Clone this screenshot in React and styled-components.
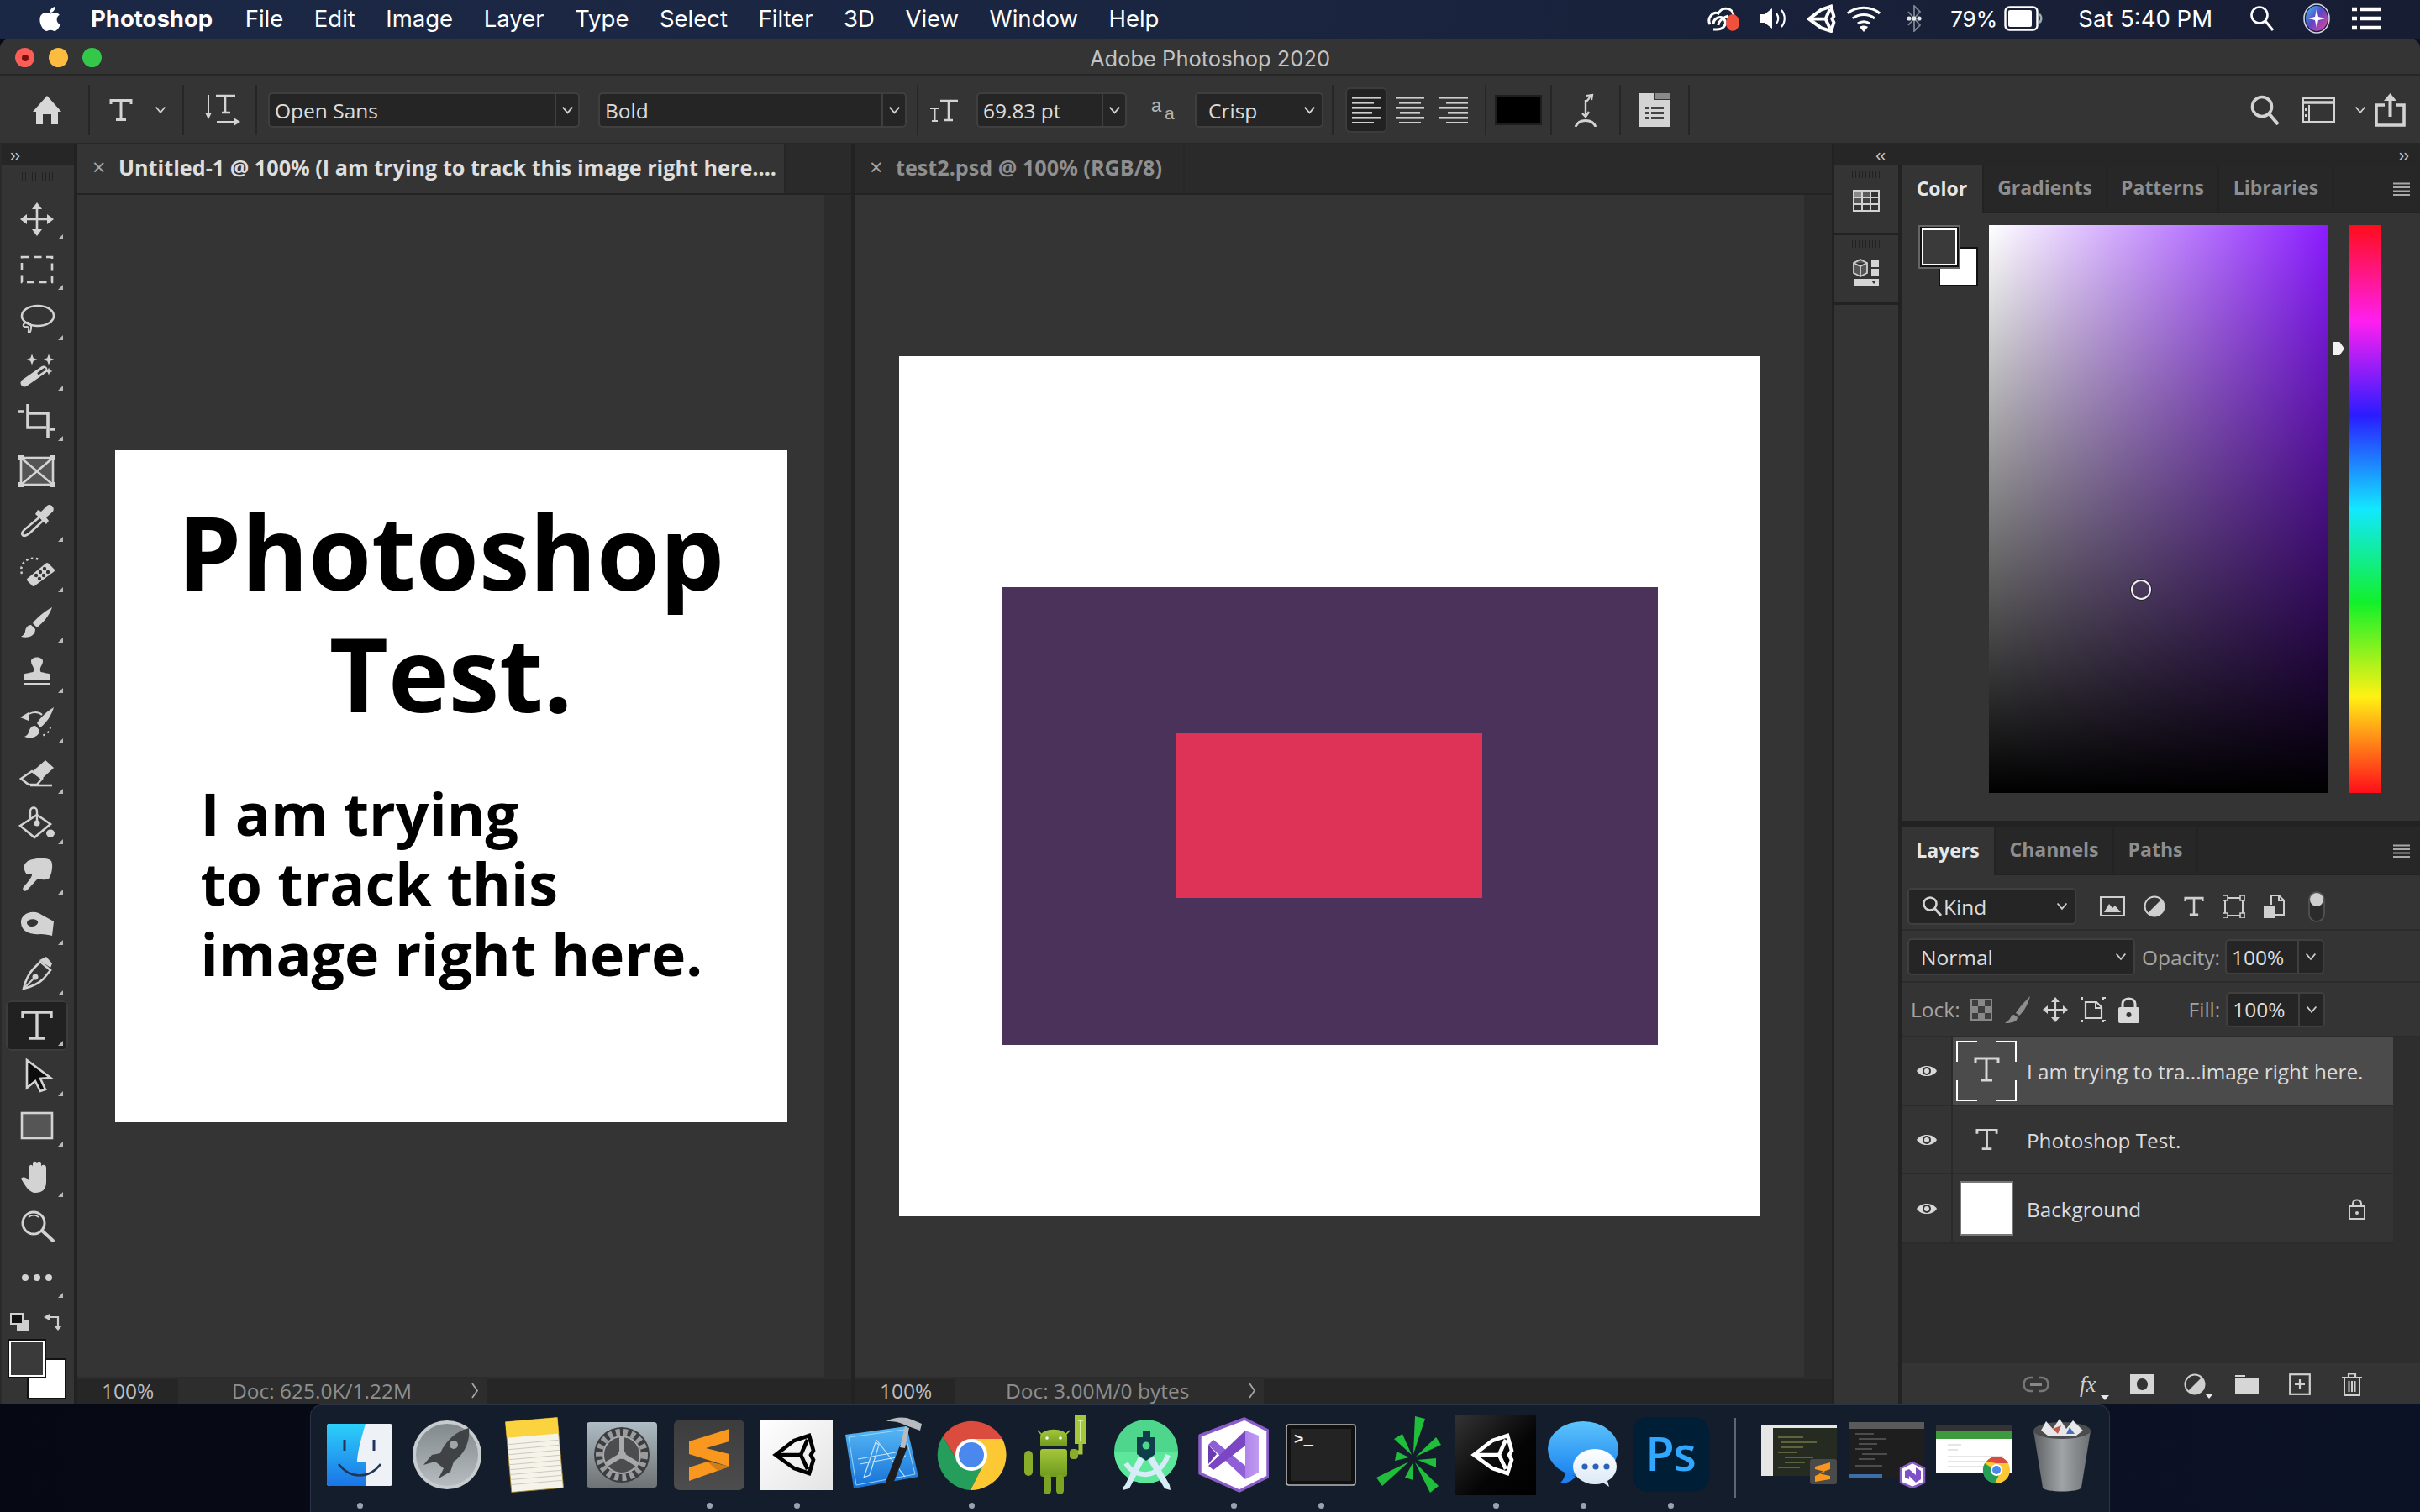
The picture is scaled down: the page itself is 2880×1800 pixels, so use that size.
import React from 'react';
import styled, { createGlobalStyle } from 'styled-components';
import { FaApple } from 'react-icons/fa';

const GlobalStyle = createGlobalStyle`
  html, body { margin: 0; padding: 0; background: #0a0f1d; }
  * { box-sizing: border-box; }
`;

const UI = `"Open Sans", "Noto Sans", sans-serif`;
const ICON = '#d3d3d3';

const Page = styled.div`
  width: 2880px;
  height: 1800px;
  overflow: hidden;
  background: linear-gradient(90deg, #060913 0%, #0c1226 100%);
  font-family: ${UI};
`;

const Glyph = styled.svg`
  display: block;
  flex: none;
  color: ${p => p.$color || ICON};
`;
const Ico = ({ w, h, vw, vh, color, children, style }) => (
  <Glyph width={w} height={h} viewBox={`0 0 ${vw || w} ${vh || h}`} $color={color} style={style}>{children}</Glyph>
);

/* ---------- macOS menu bar ---------- */
const MenuBar = styled.div`
  height: 46px;
  display: flex;
  align-items: center;
  padding: 0 46px 2px 43px;
  background: linear-gradient(90deg, #1b2845 0%, #1a2540 50%, #171d33 100%);
  color: #fff;
  font-family: "Inter", sans-serif;
  font-size: 27.5px;
`;
const MenuItems = styled.div`
  display: flex;
  align-items: center;
  gap: 36.5px;
  margin-left: 32px;
`;
const AppName = styled.span`
  font-weight: 700;
  margin-right: 2px;
`;
const Status = styled.div`
  margin-left: auto;
  display: flex;
  align-items: center;
  gap: 20px;
`;
const Clock = styled.span`
  margin: 0 24px 0 22px;
`;
const Percent = styled.span`
  font-size: 26px;
  margin: 0 -12px 0 12px;
`;

/* ---------- Photoshop window ---------- */
const Window = styled.div`
  height: 1626px;
  display: flex;
  flex-direction: column;
  background: #333;
  border-radius: 12px 12px 0 0;
  color: #d6d6d6;
  overflow: hidden;
`;
const TitleBar = styled.div`
  height: 44px;
  flex: none;
  position: relative;
  display: flex;
  align-items: center;
  justify-content: center;
  padding-top: 4px;
  font-family: "Inter", sans-serif;
  font-size: 25.5px;
  color: #c3c3c3;
  background: #343434;
  border-bottom: 2px solid #262626;
`;
const Lights = styled.div`
  position: absolute;
  left: 18px;
  top: 11px;
  display: flex;
  gap: 17px;
`;
const Light = styled.span`
  width: 23px;
  height: 23px;
  border-radius: 50%;
  background: ${p => p.$c};
  display: flex;
  align-items: center;
  justify-content: center;
  &::after {
    content: "";
    width: 8px;
    height: 8px;
    border-radius: 50%;
    background: ${p => p.$dot || 'transparent'};
  }
`;

const Options = styled.div`
  height: 82px;
  flex: none;
  display: flex;
  align-items: center;
  padding-top: 2px;
  background: #343434;
  border-bottom: 2px solid #272727;
`;
const OptCell = styled.div`
  width: ${p => p.$w}px;
  height: 60px;
  flex: none;
  display: flex;
  align-items: center;
  justify-content: ${p => p.$justify || 'center'};
  gap: ${p => p.$gap || 0}px;
  padding-left: ${p => p.$pl || 0}px;
  border-right: ${p => (p.$plain ? 'none' : '2px solid #262626')};
`;
const Field = styled.div`
  width: ${p => p.$w}px;
  height: ${p => p.$h || 42}px;
  flex: none;
  display: flex;
  align-items: center;
  background: #252525;
  border: 2px solid #3f3f3f;
  border-radius: 5px;
  font-size: 24.5px;
  color: ${p => p.$color || '#dcdcdc'};
  white-space: nowrap;
`;
const FieldText = styled.span`
  flex: 1;
  padding-left: ${p => p.$pl || 6}px;
`;
const FieldBtn = styled.span`
  width: ${p => p.$w || 28}px;
  height: 100%;
  flex: none;
  display: flex;
  align-items: center;
  justify-content: center;
  border-left: ${p => (p.$plain ? 'none' : '2px solid #3f3f3f')};
`;
const Chevron = ({ size = 15, color = '#cfcfcf' }) => (
  <Ico w={size} h={size * 0.7} vw={14} vh={10} color={color}>
    <path d="M1.5 1.5 L7 8 L12.5 1.5" fill="none" stroke="currentColor" strokeWidth="1.8" />
  </Ico>
);
const AlignBtn = styled.div`
  width: 50px;
  height: 54px;
  display: flex;
  align-items: center;
  justify-content: center;
  border-radius: 6px;
  background: ${p => (p.$active ? '#222' : 'transparent')};
  border: 2px solid ${p => (p.$active ? '#3c3c3c' : 'transparent')};
`;
const ColorChip = styled.div`
  width: 56px;
  height: 36px;
  background: #000;
  border: 2px solid #1e1e1e;
`;
const OptRight = styled.div`
  margin-left: auto;
  display: flex;
  align-items: center;
  padding-right: 17px;
`;

/* ---------- workspace ---------- */
const Workspace = styled.div`
  flex: 1;
  min-height: 0;
  display: flex;
  background: #222;
`;
const ToolColumn = styled.div`
  width: 88px;
  flex: none;
  display: flex;
  flex-direction: column;
  background: #343434;
  margin-right: 4px;
  border-left: 2px solid #2a2a2a;
`;
const Collapse = styled.div`
  height: 25px;
  flex: none;
  display: flex;
  align-items: center;
  justify-content: ${p => p.$justify || 'flex-start'};
  padding: 0 ${p => p.$px || 10}px 4px;
  background: #262626;
  color: #c8c8c8;
  font-size: 22px;
  letter-spacing: -1px;
`;
const Grip = styled.div`
  width: ${p => p.$w || 38}px;
  height: ${p => p.$h || 10}px;
  flex: none;
  margin: ${p => p.$m || '8px auto 16px'};
  background: repeating-linear-gradient(90deg, #222 0 1.5px, transparent 1.5px 4px);
`;
const ToolBtn = styled.div`
  position: relative;
  height: 60px;
  width: 74px;
  flex: none;
  margin-left: 5px;
  display: flex;
  align-items: center;
  justify-content: center;
  border-radius: 6px;
  background: ${p => (p.$active ? '#212121' : 'transparent')};
  box-shadow: ${p => (p.$active ? 'inset 0 0 0 2px #3c3c3c' : 'none')};
  &::after {
    content: "";
    display: ${p => (p.$flyout ? 'block' : 'none')};
    position: absolute;
    right: 6px;
    bottom: 6px;
    border-style: solid;
    border-width: 0 0 6px 6px;
    border-color: transparent transparent #b9b9b9 transparent;
  }
`;
const SwatchBlock = styled.div`
  flex: 1;
  display: flex;
  flex-direction: column;
  padding: 12px 0 0 8px;
`;
const SwapRow = styled.div`
  display: flex;
  align-items: center;
  gap: 18px;
  padding: 0 0 10px 2px;
`;
const SwatchStack = styled.div`
  position: relative;
  width: 68px;
  height: 70px;
`;
const Swatch = styled.div`
  position: absolute;
  left: ${p => p.$x}px;
  top: ${p => p.$y}px;
  width: ${p => p.$w}px;
  height: ${p => p.$h}px;
  background: ${p => p.$bg};
  border: ${p => p.$b || '2px solid #fff'};
  outline: 2px solid #111;
  box-shadow: ${p => (p.$ring ? '0 0 0 4px #666' : 'none')};
`;

const DocPane = styled.div`
  width: ${p => p.$w}px;
  flex: none;
  margin-right: ${p => p.$mr || 0}px;
  display: flex;
  flex-direction: column;
`;
const TabRow = styled.div`
  height: 60px;
  flex: none;
  display: flex;
  background: #2a2a2a;
  border-bottom: 2px solid #232323;
`;
const DocTab = styled.div`
  width: ${p => p.$w}px;
  display: flex;
  align-items: center;
  gap: 19px;
  padding: 0 0 5px 18px;
  background: ${p => (p.$active ? '#343434' : '#2a2a2a')};
  border-right: 2px solid #262626;
  color: ${p => (p.$active ? '#dedede' : '#8f8f8f')};
  font-size: 25.2px;
  font-weight: 700;
  white-space: nowrap;
  overflow: hidden;
`;
const CloseX = styled.span`
  font-size: 27px;
  font-weight: 400;
  color: #a6a6a6;
  width: 12px;
`;
const DocBody = styled.div`
  flex: 1;
  min-height: 0;
  display: flex;
`;
const CanvasArea = styled.div`
  flex: 1;
  display: flex;
  align-items: center;
  justify-content: center;
  background: #343434;
`;
const ScrollGutter = styled.div`
  width: ${p => p.$w}px;
  flex: none;
  background: #2c2c2c;
`;
const StatusBar = styled.div`
  height: 33px;
  flex: none;
  display: flex;
  align-items: stretch;
  background: #262626;
  border-top: 3px solid #2c2c2c;
  font-size: 24.5px;
  color: #bdbdbd;
`;
const ZoomField = styled.div`
  width: ${p => p.$w}px;
  padding: 0 0 4px ${p => p.$pl}px;
  display: flex;
  align-items: center;
`;
const DocInfo = styled.div`
  width: ${p => p.$w}px;
  display: flex;
  align-items: center;
  justify-content: space-between;
  padding: 0 9px 4px ${p => p.$pl}px;
  background: #2d2d2d;
  color: #8e8e8e;
`;
const InfoArrow = () => (
  <Ico w={10} h={19}>
    <path d="M2 1 L8 9.5 L2 18" fill="none" stroke="#a5a5a5" strokeWidth="1.8" />
  </Ico>
);

const Artboard = styled.div`
  width: ${p => p.$size}px;
  height: ${p => p.$size}px;
  flex: none;
  background: #fff;
  color: #000;
  font-weight: 700;
`;
const BigText = styled.div`
  padding-top: 48px;
  font-size: 121.4px;
  line-height: 145px;
  text-align: center;
`;
const SmallText = styled.div`
  margin: 52px 0 0 102px;
  font-size: 69.83px;
  line-height: 83.5px;
`;
const Plum = styled.div`
  width: 781px;
  height: 545px;
  margin: 275px auto 0;
  background: #4a325a;
  display: flex;
  align-items: center;
  justify-content: center;
`;
const Rose = styled.div`
  width: 364px;
  height: 196px;
  background: #de3357;
`;

/* ---------- right docks ---------- */
const RightSide = styled.div`
  flex: 1;
  min-width: 0;
  display: flex;
  flex-direction: column;
  margin-left: 3px;
`;
const RightCols = styled.div`
  flex: 1;
  min-height: 0;
  display: flex;
`;
const IconDock = styled.div`
  width: 76px;
  flex: none;
  display: flex;
  flex-direction: column;
  gap: 3px;
  background: #222;
  margin-right: 4px;
`;
const DockCard = styled.div`
  height: ${p => p.$h}px;
  flex: ${p => (p.$grow ? 1 : 'none')};
  display: flex;
  flex-direction: column;
  align-items: center;
  background: #343434;
`;
const Panels = styled.div`
  flex: 1;
  min-width: 0;
  display: flex;
  flex-direction: column;
  gap: 8px;
`;
const Panel = styled.div`
  height: ${p => p.$h}px;
  flex: ${p => (p.$grow ? 1 : 'none')};
  min-height: 0;
  display: flex;
  flex-direction: column;
  background: #343434;
`;
const PanelTabs = styled.div`
  height: 57px;
  flex: none;
  display: flex;
  align-items: stretch;
  background: #272727;
  border-bottom: 2px solid #232323;
`;
const PanelTab = styled.div`
  width: ${p => p.$w}px;
  flex: none;
  display: flex;
  align-items: center;
  justify-content: center;
  padding-bottom: 3px;
  font-size: 23px;
  font-weight: 700;
  color: ${p => (p.$active ? '#e6e6e6' : '#8e8e8e')};
  background: ${p => (p.$active ? '#343434' : 'transparent')};
  margin-bottom: ${p => (p.$active ? '-2px' : 0)};
  border-right: 2px solid #232323;
`;
const PanelMenu = styled.div`
  margin-left: auto;
  padding-right: 12px;
  display: flex;
  align-items: center;
`;
const ColorBody = styled.div`
  flex: 1;
  display: flex;
  padding: 14px 0 0 20px;
`;
const ColorChips = styled.div`
  position: relative;
  width: 84px;
  height: 72px;
  flex: none;
`;
const Picker = styled.div`
  position: relative;
  width: 404px;
  height: 676px;
  flex: none;
  background:
    linear-gradient(180deg, transparent 0%, #000 100%),
    linear-gradient(90deg, #fff 0%, #8a1cff 100%);
`;
const PickRing = styled.span`
  position: absolute;
  left: 169px;
  top: 422px;
  width: 24px;
  height: 24px;
  border-radius: 50%;
  border: 2px solid #eee;
  box-shadow: 0 0 0 1px #222;
`;
const HueWrap = styled.div`
  position: relative;
  width: 38px;
  height: 676px;
  margin-left: 24px;
  background: linear-gradient(180deg, #ff0d1a 0%, #ff1ff0 17%, #2a1cff 33.5%, #12e8ff 50%, #12f02a 66.5%, #fff214 83%, #ff0d1a 100%);
`;
const HueArrow = styled.span`
  position: absolute;
  left: -19px;
  top: 139px;
  width: 14px;
  height: 16px;
  background: #f2f2f2;
  clip-path: polygon(0 0, 60% 0, 100% 50%, 60% 100%, 0 100%);
`;

const CtrlRow = styled.div`
  height: ${p => p.$h}px;
  flex: none;
  display: flex;
  align-items: center;
  padding: ${p => p.$pt || 0}px 0 0 ${p => p.$pl || 7}px;
  border-bottom: 2px solid #2b2b2b;
  font-size: 24.5px;
`;
const CtrlLabel = styled.span`
  color: #a3a3a3;
  margin: ${p => p.$m || '0 0 0 8px'};
`;
const IconRow = styled.div`
  display: flex;
  align-items: center;
  gap: ${p => p.$gap}px;
  margin-left: ${p => p.$ml}px;
`;
const LayerList = styled.div`
  flex: 1;
  min-height: 0;
  display: flex;
  flex-direction: column;
  padding-right: 32px;
  background: #2e2e2e;
`;
const LayerRow = styled.div`
  height: ${p => p.$h || 81}px;
  flex: none;
  display: flex;
  align-items: center;
  background: ${p => (p.$selected ? '#4b4b4b' : '#343434')};
  border-bottom: 2px solid #2b2b2b;
  color: #dcdcdc;
  font-size: 24.3px;
`;
const EyeCell = styled.div`
  width: 61px;
  height: 100%;
  flex: none;
  display: flex;
  align-items: center;
  justify-content: center;
  background: #343434;
  border-right: 2px solid #2b2b2b;
`;
const Thumb = styled.div`
  width: 88px;
  height: 100%;
  flex: none;
  display: flex;
  align-items: center;
  justify-content: center;
  padding-right: 8px;
`;
const WhiteThumb = styled.div`
  width: 64px;
  height: 65px;
  background: #fff;
  border: 2px solid #777;
`;
const LayerName = styled.span`
  flex: 1;
  white-space: nowrap;
  padding-top: 1px;
`;
const LayerLock = styled.span`
  margin-right: 33px;
`;
const PanelFooter = styled.div`
  height: 49px;
  flex: none;
  display: flex;
  align-items: center;
  background: #343434;
  padding-left: 144px;
`;

/* ---------- macOS dock ---------- */
const Dock = styled.div`
  width: 2142px;
  height: 128px;
  margin-left: 369px;
  display: flex;
  padding: 0 0 0 6px;
  background: #141d2c;
  border: 1px solid #2a3444;
  border-bottom: none;
  border-radius: 14px 14px 0 0;
`;
const DockSlot = styled.div`
  position: relative;
  width: 104px;
  flex: none;
  display: flex;
  align-items: center;
  justify-content: center;
  padding-bottom: 10px;
  &::after {
    content: "";
    display: ${p => (p.$open ? 'block' : 'none')};
    position: absolute;
    left: 49px;
    bottom: 4px;
    width: 7px;
    height: 7px;
    border-radius: 50%;
    background: #9aa3ad;
  }
`;
const DockSep = styled.div`
  width: 2px;
  height: 95px;
  margin: 15px 24px 0 24px;
  flex: none;
  background: #5d6672;
`;
const PsTile = styled.div`
  width: 91px;
  height: 89px;
  border-radius: 18px;
  background: #001e36;
  color: #31a8ff;
  font-size: 56px;
  font-weight: 600;
  letter-spacing: -1px;
  line-height: 84px;
  text-align: center;
`;

/* ---------- small drawings ---------- */
const SerifT = ({ w = 28, h = 28, color }) => (
  <Ico w={w} h={h} vw={28} vh={28} color={color}>
    <path d="M2 7 V2.5 H26 V7 M14 2.5 V25.5 M8 25.5 H20" fill="none" stroke="currentColor" strokeWidth="3" />
  </Ico>
);
const Hamburger = () => (
  <Ico w={20} h={16}>
    <path d="M0 1.5H20M0 6H20M0 10.5H20M0 15H20" stroke="#a9a9a9" strokeWidth="2" />
  </Ico>
);
const Eye = () => (
  <Ico w={26} h={18}>
    <path d="M1 9 C6 1 20 1 25 9 C20 17 6 17 1 9 Z" fill="#d8d8d8" />
    <circle cx="13" cy="9" r="5" fill="#343434" />
    <circle cx="13" cy="9" r="3" fill="#d8d8d8" />
  </Ico>
);
const AlignIcon = ({ kind }) => {
  const rows = [0, 6, 12, 18, 24, 30];
  const widths = [34, 26, 34, 24, 34, 26];
  return (
    <Ico w={36} h={32}>
      {rows.map((y, i) => {
        const w = widths[i];
        const x = kind === 'l' ? 1 : kind === 'c' ? (36 - w) / 2 : 35 - w;
        return <rect key={y} x={x} y={y} width={w} height="2.6" fill="#cfcfcf" />;
      })}
    </Ico>
  );
};
const SmallCaret = styled.span`
  align-self: flex-end;
  margin: 0 0 -4px -1px;
  border-style: solid;
  border-width: 6px 5px 0 5px;
  border-color: #e8e8e8 transparent transparent transparent;
`;
const UnityPaths = ({ color = '#fff', sw = 4.6 }) => (
  <g fill="none" stroke={color} strokeWidth={sw}>
    <path d="M3 27 L25 10 L43 4 L48 22 L45 27 L48 33 L43 49 L25 43 Z" />
    <path d="M3 27 H33 L41 9 M33 27 L41 44" />
  </g>
);

/* tools, drawn on a 44 box */
const s = { fill: 'none', stroke: 'currentColor', strokeWidth: 2.6 };
const f = { fill: 'currentColor' };
const Spark = ({ x, y, r }) => (
  <path d={`M${x} ${y - r} L${x + r * 0.28} ${y - r * 0.28} L${x + r} ${y} L${x + r * 0.28} ${y + r * 0.28} L${x} ${y + r} L${x - r * 0.28} ${y + r * 0.28} L${x - r} ${y} L${x - r * 0.28} ${y - r * 0.28} Z`} {...f} />
);
const toolIcons = [
  <g key="move">
    <path d="M22 5V39M5 22H39" {...s} />
    <path d="M22 2 L28 10 H16Z M22 42 L28 34 H16Z M2 22 L10 16 V28Z M42 22 L34 16 V28Z" {...f} />
  </g>,
  <rect key="marquee" x="4" y="7" width="36" height="30" {...s} strokeDasharray="9 5.5" />,
  <g key="lasso" {...s}>
    <ellipse cx="23" cy="17" rx="19" ry="12" />
    <path d="M6 27 C10 23 14 25 15 29 C16 34 13 38 12 37 C11 35 14 30 10 30 C7 31 5 29 6 27 Z" strokeWidth="2" />
  </g>,
  <g key="wand">
    <path d="M7 37 L30 21" stroke="currentColor" strokeWidth="9" strokeLinecap="round" />
    <path d="M24 25.5 L31 20.5" stroke="#343434" strokeWidth="3" strokeLinecap="round" />
    <Spark x={16} y={9} r={6.5} /><Spark x={36} y={9} r={6.5} /><Spark x={36} y={23} r={4.5} />
  </g>,
  <path key="crop" d="M-2 11 H6 M11 2 V30 H33 M11 13 H35 V42 M38 32 H46" fill="none" stroke="currentColor" strokeWidth="3.6" />,
  <g key="frame">
    <rect x="3" y="6" width="38" height="32" fill="#555" stroke="currentColor" strokeWidth="2.6" />
    <path d="M3 6 L41 38 M41 6 L3 38" {...s} />
    <path d="M0 3h6v6H0Z M38 3h6v6h-6Z M0 35h6v6H0Z M38 35h6v6h-6Z" {...f} />
  </g>,
  <g key="dropper">
    <path d="M27 15 L9 30 C5 33 3 36 5 38 C7 40 10 38 13 36 L31 19" {...s} />
    <path d="M20 13 L33 25 L36 21 L33 17 L41 10 C44 5 38 0 34 3 L27 10 L23 8 Z" {...f} />
  </g>,
  <g key="heal">
    <path d="M12 31 L34 13 L41 20 L18 37 Z" fill="currentColor" stroke="currentColor" strokeWidth="4" strokeLinejoin="round" />
    <g fill="#343434"><circle cx="21" cy="26" r="2.2" /><circle cx="26" cy="22" r="2.2" /><circle cx="31" cy="18" r="2.2" /><circle cx="25" cy="30" r="2.2" /><circle cx="30" cy="26" r="2.2" /><circle cx="35" cy="22" r="2.2" /></g>
    <path d="M4 24 C0 12 12 2 24 7" fill="none" stroke="currentColor" strokeWidth="2.4" strokeDasharray="2.5 3.5" />
  </g>,
  <path key="brush" d="M40 4 C32 8 22 16 17 23 L22 28 C30 22 37 13 40 4 Z M15 25 C10 25 8 30 8 33 C7 36 5 38 3 39 C10 41 20 39 20 30 Z" {...f} />,
  <g key="stamp" {...f}>
    <path d="M15 8 C15 2 29 2 29 8 C29 13 25 14 26 20 C26 22 36 22 38 24 V31 H6 V24 C8 22 18 22 18 20 C19 14 15 13 15 8 Z" />
    <rect x="6" y="34" width="32" height="3" />
  </g>,
  <g key="history">
    <path d="M42 3 C34 8 26 15 22 22 L26 27 C33 22 39 13 42 3 Z M20 25 C14 25 13 30 12 33 C11 36 9 37 7 38 C14 41 25 39 25 30 Z" {...f} />
    <path d="M2 15 L12 9 L12 19 Z" {...f} />
    <path d="M10 13 C15 8 24 8 28 12" {...s} strokeWidth="2" />
    <path d="M38 26 C38 31 34 35 28 37" fill="none" stroke="currentColor" strokeWidth="2" strokeDasharray="2.5 3.5" />
  </g>,
  <g key="eraser">
    <path d="M16 20 L32 6 L42 15 L28 28 Z" {...f} />
    <path d="M3 28 L16 19 L28 28 L22 35 H12 Z" {...s} />
    <path d="M14 36 H40" {...s} />
  </g>,
  <g key="bucket">
    <path d="M2 24 L22 11 L38 22 L19 38 Z" {...s} />
    <path d="M14 15 V7 C14 1 22 1 22 7 V22" fill="none" stroke="currentColor" strokeWidth="2.4" />
    <circle cx="22" cy="21" r="3.5" {...f} />
    <ellipse cx="38" cy="33" rx="5" ry="4.5" {...f} />
  </g>,
  <path key="smudge" d="M10 7 C14 3 32 1 38 5 C42 8 40 22 36 27 C30 30 26 26 22 28 L10 41 C6 43 4 40 6 37 C10 32 17 25 16 21 C12 23 9 22 8 19 C6 14 6 10 10 7 Z" {...f} />,
  <path key="dodge" fillRule="evenodd" d="M3 20 C2 10 14 4 24 8 C30 11 36 15 42 18 L40 35 C36 34 32 33 26 33 C18 34 4 32 3 20 Z M10 19 C10 25 20 26 23 20 C25 15 12 13 10 19 Z" {...f} />,
  <g key="pen">
    <path d="M26 6 L38 16 L30 26 C24 32 14 36 6 38 C8 30 12 20 18 14 Z" {...s} />
    <path d="M25 4 L33 0 L40 8 L38 13 Z" {...f} />
    <circle cx="20" cy="24" r="3.5" {...f} />
    <path d="M8 36 L19 25" {...s} strokeWidth="2" />
  </g>,
  <path key="type" d="M5 13 V6 H39 V13 M22 6 V37 M12 37 H32" fill="none" stroke="currentColor" strokeWidth="3.4" />,
  <path key="pathsel" d="M10 3 L38 24 L26 25 L32 38 L26 40 L20 28 L10 36 Z" fill="#0c0c0c" stroke="currentColor" strokeWidth="2.6" />,
  <rect key="rect" x="4" y="6" width="36" height="30" fill="#555" stroke="currentColor" strokeWidth="2.6" />,
  <path key="hand" d="M3 24 C6 21 10 23 13 27 V10 C13 7 17 7 17 10 V6 C17 3 22 3 22 6 V6 C22 3 27 3 27 6 V10 C27 7 33 7 33 11 V28 C33 37 28 41 20 41 C13 41 8 33 3 24 Z" {...f} />,
  <g key="zoom">
    <circle cx="18" cy="17" r="13" {...s} strokeWidth="3" />
    <path d="M28 26 L41 38" stroke="currentColor" strokeWidth="4" strokeLinecap="round" />
    <path d="M12 10 C16 7 20 7 24 10" {...s} strokeWidth="1.6" />
  </g>,
  <g key="more" {...f}><circle cx="8" cy="22" r="4" /><circle cx="22" cy="22" r="4" /><circle cx="36" cy="22" r="4" /></g>,
];
const noFlyout = ['zoom', 'frame'];

const menus = ['File', 'Edit', 'Image', 'Layer', 'Type', 'Select', 'Filter', '3D', 'View', 'Window', 'Help'];

const App = () => {
  return (
    <Page>
      <GlobalStyle />
      <MenuBar>
        <FaApple size={33} color="#fff" />
        <MenuItems>
          <AppName>Photoshop</AppName>
          {menus.map(m => <span key={m}>{m}</span>)}
        </MenuItems>
        <Status>
          <Ico w={42} h={30}>
            <g fill="none" stroke="#fff" strokeWidth="3">
              <path d="M4 22 C0 14 8 6 14 9 C18 0 32 2 32 12" />
              <path d="M8 22 C8 14 18 10 22 18 C24 22 20 28 12 28 H8" />
              <path d="M14 23 C14 17 22 13 26 12" />
            </g>
            <ellipse cx="31" cy="20" rx="8" ry="10" fill="#f0503c" />
          </Ico>
          <Ico w={34} h={28}>
            <path d="M1 9 H7 L16 2 V26 L7 19 H1 Z" fill="#fff" />
            <path d="M21 8 C24 12 24 16 21 20 M27 4 C32 10 32 18 27 24" fill="none" stroke="#fff" strokeWidth="2.2" />
          </Ico>
          <Ico w={34} h={34} vw={52} vh={52} style={{ marginLeft: 4 }}>
            <UnityPaths sw={6} />
          </Ico>
          <Ico w={42} h={32} style={{ marginLeft: -8 }}>
            <g fill="none" stroke="#fff" strokeWidth="3.2">
              <path d="M2 10 C12 1 30 1 40 10" /><path d="M8 16 C15 10 27 10 34 16" /><path d="M14 22 C18 19 24 19 28 22" />
            </g>
            <path d="M21 32 L16 26 C19 24 23 24 26 26 Z" fill="#fff" />
          </Ico>
          <Ico w={22} h={32} style={{ marginLeft: 8 }}>
            <path d="M4 8 L18 24 L11 31 V1 L18 8 L4 24" fill="none" stroke="#7d8694" strokeWidth="1.8" />
            <circle cx="5" cy="16" r="2.6" fill="#e6e6e6" /><circle cx="11" cy="16" r="2.6" fill="#e6e6e6" /><circle cx="17" cy="16" r="2.6" fill="#e6e6e6" />
          </Ico>
          <Percent>79%</Percent>
          <Ico w={46} h={30}>
            <rect x="1.5" y="1.5" width="38" height="27" rx="5" fill="none" stroke="#fff" strokeWidth="2.4" />
            <rect x="5" y="5" width="28" height="20" rx="2" fill="#fff" />
            <path d="M42 10 C45 12 45 18 42 20" fill="none" stroke="#9aa" strokeWidth="2.5" />
          </Ico>
          <Clock>Sat 5:40 PM</Clock>
          <Ico w={30} h={32}>
            <circle cx="12" cy="12" r="9.5" fill="none" stroke="#fff" strokeWidth="2.6" />
            <path d="M19 19 L28 30" stroke="#fff" strokeWidth="3" />
          </Ico>
          <Ico w={32} h={36} style={{ margin: '0 6px 0 14px' }}>
            <defs>
              <linearGradient id="siri" x1="0" y1="0" x2="1" y2="1">
                <stop offset="0" stopColor="#38c6f2" /><stop offset="0.45" stopColor="#5a46c8" /><stop offset="1" stopColor="#f0459a" />
              </linearGradient>
            </defs>
            <ellipse cx="16" cy="18" rx="15" ry="17" fill="#16203a" stroke="#cfd3e0" strokeWidth="1.6" />
            <ellipse cx="16" cy="18" rx="13" ry="15" fill="url(#siri)" />
            <path d="M16 7 L18 16 L26 18 L18 20 L16 29 L14 20 L6 18 L14 16 Z" fill="#fff" />
          </Ico>
          <Ico w={35} h={28}>
            <path d="M0 3H6M10 3H35M0 14H6M10 14H35M0 25H6M10 25H35" stroke="#fff" strokeWidth="4.4" />
          </Ico>
        </Status>
      </MenuBar>

      <Window>
        <TitleBar>
          <Lights>
            <Light $c="#fc5d57" $dot="#7a0f0c" />
            <Light $c="#fdbc40" />
            <Light $c="#34c84a" />
          </Lights>
          Adobe Photoshop 2020
        </TitleBar>

        <Options>
          <OptCell $w={107} $pl={6}>
            <Ico w={42} h={36}>
              <path d="M21 1 L38 20 H34 V35 H26 V23 H16 V35 H8 V20 H4 Z" fill="#d8d8d8" />
            </Ico>
          </OptCell>
          <OptCell $w={112} $gap={26} $pl={3}>
            <SerifT />
            <Chevron size={14} />
          </OptCell>
          <OptCell $w={87} $pl={6}>
            <Ico w={42} h={38}>
              <path d="M4 1 V26" stroke={ICON} strokeWidth="2" />
              <path d="M0 22 L4 30 L8 22 Z" fill={ICON} />
              <path d="M13 2 H36 M24 2 V22 M20 22 H30" stroke={ICON} strokeWidth="2.6" fill="none" />
              <path d="M14 33 H36" stroke={ICON} strokeWidth="2" />
              <path d="M34 28 L42 33 L34 38 Z" fill={ICON} />
            </Ico>
          </OptCell>
          <OptCell $w={787} $justify="flex-start" $pl={13} $gap={22}>
            <Field $w={371}>
              <FieldText>Open Sans</FieldText>
              <FieldBtn><Chevron /></FieldBtn>
            </Field>
            <Field $w={367}>
              <FieldText>Bold</FieldText>
              <FieldBtn><Chevron /></FieldBtn>
            </Field>
          </OptCell>
          <OptCell $w={494} $justify="flex-start" $pl={14}>
            <Ico w={34} h={28} style={{ marginRight: 21 }}>
              <path d="M12 3 H33 M22 3 V26 M17 26 H27" stroke={ICON} strokeWidth="2.6" fill="none" />
              <path d="M0 12 H11 M5.5 12 V27 M2 27 H9" stroke={ICON} strokeWidth="2" fill="none" />
            </Ico>
            <Field $w={179}>
              <FieldText>69.83 pt</FieldText>
              <FieldBtn><Chevron /></FieldBtn>
            </Field>
            <Ico w={32} h={30} style={{ margin: '0 22px 0 27px' }}>
              <text x="2" y="17" fontSize="22" fill="#b5b5b5" fontFamily="Liberation Sans, sans-serif">a</text>
              <text x="18" y="26" fontSize="21" fill="#b5b5b5" fontFamily="Liberation Sans, sans-serif">a</text>
            </Ico>
            <Field $w={153}>
              <FieldText $pl={14}>Crisp</FieldText>
              <FieldBtn $plain $w={30}><Chevron /></FieldBtn>
            </Field>
          </OptCell>
          <OptCell $w={182} $justify="flex-start" $pl={14} $gap={2}>
            <AlignBtn $active><AlignIcon kind="l" /></AlignBtn>
            <AlignBtn><AlignIcon kind="c" /></AlignBtn>
            <AlignBtn><AlignIcon kind="r" /></AlignBtn>
          </OptCell>
          <OptCell $w={78}><ColorChip /></OptCell>
          <OptCell $w={82}>
            <Ico w={28} h={40}>
              <path d="M15 10 C17 8 19 6 20 2 M15 3 L22 2 L21 8" stroke={ICON} strokeWidth="2.2" fill="none" />
              <path d="M14 8 V26 M10 24 L14 28 L18 22" stroke={ICON} strokeWidth="2.4" fill="none" />
              <path d="M2 40 C6 30 22 30 26 40" stroke={ICON} strokeWidth="2.8" fill="none" />
            </Ico>
          </OptCell>
          <OptCell $w={82}>
            <Ico w={38} h={40}>
              <path d="M0 0 H18 V8 H38 V40 H0 Z" fill="#d4d4d4" />
              <rect x="19" y="0" width="19" height="7" fill="#8a8a8a" />
              <path d="M8 16h4v3H8ZM15 16h15v3H15ZM8 22h4v3H8ZM15 22h15v3H15ZM8 28h4v3H8ZM15 28h15v3H15Z" fill="#444" />
            </Ico>
          </OptCell>
          <OptRight>
            <Ico w={34} h={36}>
              <circle cx="14" cy="14" r="11.5" fill="none" stroke={ICON} strokeWidth="3.6" />
              <path d="M22 22 L33 35" stroke={ICON} strokeWidth="4" />
            </Ico>
            <Ico w={40} h={32} style={{ margin: '0 0 0 27px' }}>
              <path d="M1.5 1.5 H38.5 V30.5 H1.5 Z" fill="none" stroke={ICON} strokeWidth="3" />
              <path d="M0 7 H40" stroke={ICON} strokeWidth="3.5" />
              <path d="M9 10 V30" stroke={ICON} strokeWidth="2" />
              <rect x="4" y="14" width="3" height="3" fill={ICON} /><rect x="4" y="21" width="3" height="3" fill={ICON} />
            </Ico>
            <span style={{ margin: '0 10px 0 23px' }}><Chevron size={14} /></span>
            <Ico w={37} h={40}>
              <path d="M12 14 H2 V38 H35 V14 H25" fill="none" stroke={ICON} strokeWidth="3.6" />
              <path d="M18.5 28 V4" stroke={ICON} strokeWidth="4" />
              <path d="M18.5 0 L26 9 H11 Z" fill={ICON} />
            </Ico>
          </OptRight>
        </Options>

        <Workspace>
          <ToolColumn>
            <Collapse>››</Collapse>
            <Grip />
            {toolIcons.map(icon => (
              <ToolBtn key={icon.key} $active={icon.key === 'type'} $flyout={!noFlyout.includes(icon.key)}>
                <Ico w={44} h={44}>{icon}</Ico>
              </ToolBtn>
            ))}
            <SwatchBlock>
              <SwapRow>
                <Ico w={22} h={22}>
                  <rect x="8" y="9" width="14" height="12" fill="#cfcfcf" />
                  <rect x="1" y="1" width="14" height="12" fill="#111" stroke="#cfcfcf" strokeWidth="2" />
                </Ico>
                <Ico w={22} h={20}>
                  <path d="M5 4 H17 V15" fill="none" stroke="#cfcfcf" strokeWidth="2.2" />
                  <path d="M0 4 L7 0 V8 Z M12 14 H22 L17 20 Z" fill="#cfcfcf" />
                </Ico>
              </SwapRow>
              <SwatchStack>
                <Swatch $x={24} $y={24} $w={43} $h={45} $bg="#fff" $b="none" />
                <Swatch $x={1} $y={1} $w={42} $h={43} $bg="#3a3a3a" />
              </SwatchStack>
            </SwatchBlock>
          </ToolColumn>

          <DocPane $w={921} $mr={4}>
            <TabRow>
              <DocTab $w={843} $active>
                <CloseX>×</CloseX>
                Untitled-1 @ 100% (I am trying to track this image right here....
              </DocTab>
            </TabRow>
            <DocBody>
              <CanvasArea>
                <Artboard $size={800}>
                  <BigText>Photoshop<br />Test.</BigText>
                  <SmallText>I am trying<br />to track this<br />image right here.</SmallText>
                </Artboard>
              </CanvasArea>
              <ScrollGutter $w={32} />
            </DocBody>
            <StatusBar>
              <ZoomField $w={120} $pl={29}>100%</ZoomField>
              <DocInfo $w={367} $pl={64}>
                Doc: 625.0K/1.22M
                <InfoArrow />
              </DocInfo>
            </StatusBar>
          </DocPane>

          <DocPane $w={1163}>
            <TabRow>
              <DocTab $w={393}>
                <CloseX>×</CloseX>
                test2.psd @ 100% (RGB/8)
              </DocTab>
            </TabRow>
            <DocBody>
              <CanvasArea>
                <Artboard $size={1024}>
                  <Plum><Rose /></Plum>
                </Artboard>
              </CanvasArea>
              <ScrollGutter $w={33} />
            </DocBody>
            <StatusBar>
              <ZoomField $w={120} $pl={30}>100%</ZoomField>
              <DocInfo $w={367} $pl={60}>
                Doc: 3.00M/0 bytes
                <InfoArrow />
              </DocInfo>
            </StatusBar>
          </DocPane>

          <RightSide>
            <Collapse $justify="space-between" $px={14}>
              <span style={{ marginLeft: 35 }}>‹‹</span>
              <span>››</span>
            </Collapse>
            <RightCols>
              <IconDock>
                <DockCard $h={80}>
                  <Grip $w={34} $h={9} $m="6px 0 14px" />
                  <Ico w={32} h={26}>
                    <path d="M0 0H32V26H0Z" fill="#d2d2d2" />
                    <path d="M2 2h8v6H2Z" fill="#8a8a8a" /><path d="M12 2h8v6h-8Z" fill="#5a5a5a" /><path d="M22 2h8v6h-8Z" fill="#333" />
                    <path d="M2 10h8v6H2Z" fill="#555" /><path d="M12 10h8v6h-8Z" fill="#444" /><path d="M22 10h8v6h-8Z" fill="#333" />
                    <path d="M2 18h8v6H2Z" fill="#333" /><path d="M12 18h8v6h-8Z" fill="#333" /><path d="M22 18h8v6h-8Z" fill="#333" />
                  </Ico>
                </DockCard>
                <DockCard $h={80}>
                  <Grip $w={34} $h={9} $m="6px 0 13px" />
                  <Ico w={32} h={32}>
                    <path d="M9 1 L17 5 V17 L9 21 L1 17 V5 Z M1 5 L9 9 L17 5 M9 9 V21" fill="#555" stroke="#cfcfcf" strokeWidth="1.8" />
                    <rect x="22" y="1" width="9" height="9" fill="#d4d4d4" /><rect x="22" y="12" width="9" height="9" fill="#d4d4d4" />
                    <rect x="1" y="24" width="30" height="8" fill="#d4d4d4" />
                    <path d="M22 26 L28 26 L25 30 Z" fill="#333" />
                  </Ico>
                </DockCard>
                <DockCard $grow />
              </IconDock>
              <Panels>
                <Panel $h={780}>
                  <PanelTabs>
                    <PanelTab $w={98} $active>Color</PanelTab>
                    <PanelTab $w={147}>Gradients</PanelTab>
                    <PanelTab $w={133}>Patterns</PanelTab>
                    <PanelTab $w={137}>Libraries</PanelTab>
                    <PanelMenu><Hamburger /></PanelMenu>
                  </PanelTabs>
                  <ColorBody>
                    <ColorChips>
                      <Swatch $x={26} $y={28} $w={43} $h={43} $bg="#fff" $b="none" />
                      <Swatch $x={4} $y={4} $w={42} $h={44} $bg="#3a3a3a" $ring />
                    </ColorChips>
                    <Picker><PickRing /></Picker>
                    <HueWrap><HueArrow /></HueWrap>
                  </ColorBody>
                </Panel>
                <Panel $grow>
                  <PanelTabs>
                    <PanelTab $w={112} $active>Layers</PanelTab>
                    <PanelTab $w={141}>Channels</PanelTab>
                    <PanelTab $w={100}>Paths</PanelTab>
                    <PanelMenu><Hamburger /></PanelMenu>
                  </PanelTabs>
                  <CtrlRow $h={66} $pt={10}>
                    <Field $w={201} $h={44}>
                      <Ico w={24} h={26} style={{ marginLeft: 15 }}>
                        <circle cx="10" cy="10" r="7.5" fill="none" stroke="#d4d4d4" strokeWidth="2.6" />
                        <path d="M15 15 L23 24" stroke="#d4d4d4" strokeWidth="3" />
                      </Ico>
                      <FieldText $pl={2}>Kind</FieldText>
                      <FieldBtn $plain $w={30}><Chevron size={14} /></FieldBtn>
                    </Field>
                    <IconRow $gap={22} $ml={28}>
                      <Ico w={30} h={24}>
                        <rect x="1" y="1" width="28" height="22" fill="none" stroke="#cfcfcf" strokeWidth="2" />
                        <path d="M5 19 L11 9 L15 14 L18 11 L25 19 Z" fill="#cfcfcf" />
                      </Ico>
                      <Ico w={26} h={26}>
                        <circle cx="13" cy="13" r="11.5" fill="none" stroke="#cfcfcf" strokeWidth="2" />
                        <path d="M21 5 A11 11 0 0 1 5 21 Z" fill="#cfcfcf" />
                      </Ico>
                      <SerifT w={24} h={26} color="#cfcfcf" />
                      <Ico w={27} h={27}>
                        <rect x="3" y="3" width="21" height="21" fill="none" stroke="#cfcfcf" strokeWidth="2" />
                        <path d="M0 0h6v6H0ZM21 0h6v6h-6ZM0 21h6v6H0ZM21 21h6v6h-6Z" fill="#343434" stroke="#cfcfcf" strokeWidth="1.6" />
                      </Ico>
                      <Ico w={25} h={28}>
                        <path d="M9 1 H18 L24 7 V24 H14" fill="none" stroke="#cfcfcf" strokeWidth="2" />
                        <path d="M9 1 V12 M18 1 V7 H24" fill="none" stroke="#cfcfcf" strokeWidth="2" />
                        <rect x="0" y="13" width="14" height="15" fill="#cfcfcf" />
                      </Ico>
                      <Ico w={20} h={37} style={{ marginLeft: 6 }}>
                        <rect x="1" y="1" width="18" height="35" rx="9" fill="#2b2b2b" stroke="#555" strokeWidth="1.6" />
                        <circle cx="10" cy="10" r="8" fill="#cfcfcf" />
                      </Ico>
                    </IconRow>
                  </CtrlRow>
                  <CtrlRow $h={62} $pt={2}>
                    <Field $w={271} $h={44}>
                      <FieldText $pl={14}>Normal</FieldText>
                      <FieldBtn $plain $w={30}><Chevron size={14} /></FieldBtn>
                    </Field>
                    <CtrlLabel>Opacity:</CtrlLabel>
                    <Field $w={118} $h={42} style={{ marginLeft: 6 }}>
                      <FieldText $pl={6}>100%</FieldText>
                      <FieldBtn $w={30}><Chevron size={14} /></FieldBtn>
                    </Field>
                  </CtrlRow>
                  <CtrlRow $h={65} $pl={11}>
                    <CtrlLabel $m="0 12px 0 0">Lock:</CtrlLabel>
                    <IconRow $gap={14} $ml={0}>
                      <Ico w={26} h={26}>
                        <rect width="26" height="26" fill="#888" />
                        <path d="M2 2h7v7H2ZM17 2h7v7h-7ZM9 9h8v8H9ZM2 17h7v7H2ZM17 17h7v7h-7Z" fill="#3e3e3e" />
                      </Ico>
                      <Ico w={32} h={32}>
                        <path d="M31 0 C26 5 18 13 14 20 L18 23 C24 18 29 8 31 0 Z M12 22 C8 22 8 26 6 28 L1 32 C8 32 16 31 16 25 Z" fill="#8f8f8f" />
                      </Ico>
                      <Ico w={30} h={30}>
                        <path d="M15 3V27M3 15H27" stroke="#d4d4d4" strokeWidth="2.2" />
                        <path d="M15 0 L20 6 H10Z M15 30 L20 24 H10Z M0 15 L6 10 V20Z M30 15 L24 10 V20Z" fill="#d4d4d4" />
                      </Ico>
                      <Ico w={32} h={32}>
                        <path d="M7 7 H20 L26 13 V26 H7 Z" fill="none" stroke="#d4d4d4" strokeWidth="2.2" />
                        <path d="M19 7 V14 H26" fill="none" stroke="#d4d4d4" strokeWidth="2" />
                        <path d="M3 1v3M1 3h3M28 1v3M27 2h4M3 28v3M1 29h3M28 28v3M27 29h4" stroke="#d4d4d4" strokeWidth="2" />
                      </Ico>
                      <Ico w={25} h={32}>
                        <path d="M5 14 V9 C5 1 20 1 20 9 V14" fill="none" stroke="#d8d8d8" strokeWidth="3" />
                        <rect x="0" y="13" width="25" height="19" rx="2" fill="#d8d8d8" />
                        <circle cx="12.5" cy="22" r="3" fill="#343434" />
                      </Ico>
                    </IconRow>
                    <CtrlLabel $m="0 7px 0 59px">Fill:</CtrlLabel>
                    <Field $w={118} $h={42}>
                      <FieldText $pl={6}>100%</FieldText>
                      <FieldBtn $w={30}><Chevron size={14} /></FieldBtn>
                    </Field>
                  </CtrlRow>
                  <LayerList>
                    <LayerRow $selected $h={82}>
                      <EyeCell><Eye /></EyeCell>
                      <Thumb>
                        <Ico w={72} h={72} color="#fff">
                          <path d="M25 1 H1 V25 M47 1 H71 V25 M1 47 V71 H25 M71 47 V71 H47" fill="none" stroke="#fff" strokeWidth="2" />
                          <path d="M23 26 V21 H50 V26 M36 21 V47 M29 47 H43" fill="none" stroke="#d6d6d6" strokeWidth="3" />
                        </Ico>
                      </Thumb>
                      <LayerName>I am trying to tra...image right here.</LayerName>
                    </LayerRow>
                    <LayerRow>
                      <EyeCell><Eye /></EyeCell>
                      <Thumb><SerifT w={27} h={27} /></Thumb>
                      <LayerName>Photoshop Test.</LayerName>
                    </LayerRow>
                    <LayerRow $h={83}>
                      <EyeCell><Eye /></EyeCell>
                      <Thumb><WhiteThumb /></Thumb>
                      <LayerName>Background</LayerName>
                      <LayerLock>
                        <Ico w={20} h={26}>
                          <path d="M5 11 V7 C5 1 15 1 15 7 V11" fill="none" stroke="#cfcfcf" strokeWidth="2" />
                          <rect x="1" y="10" width="18" height="15" fill="none" stroke="#cfcfcf" strokeWidth="2" />
                          <circle cx="10" cy="18" r="2" fill="#cfcfcf" />
                        </Ico>
                      </LayerLock>
                    </LayerRow>
                  </LayerList>
                  <PanelFooter>
                    <Ico w={32} h={20}>
                      <path d="M12 2 H9 C-1 2 -1 18 9 18 H12 M20 2 H23 C33 2 33 18 23 18 H20" fill="none" stroke="#777" strokeWidth="2.6" />
                      <path d="M9 10 H23" stroke="#888" strokeWidth="4" />
                    </Ico>
                    <IconRow $gap={0} $ml={36}>
                      <Ico w={26} h={30}>
                        <text x="0" y="24" fontSize="27" fontStyle="italic" fill="#cfcfcf" fontFamily="Liberation Serif, serif">fx</text>
                      </Ico>
                      <SmallCaret />
                    </IconRow>
                    <Ico w={29} h={24} style={{ marginLeft: 25 }}>
                      <path d="M0 0H29V24H0Z M14.5 5 C9 5 8 9 8 12 C8 15 10 19 14.5 19 C19 19 21 15 21 12 C21 9 19 5 14.5 5 Z" fill="#d6d6d6" fillRule="evenodd" />
                    </Ico>
                    <IconRow $gap={0} $ml={35}>
                      <Ico w={26} h={26}>
                        <circle cx="13" cy="13" r="11.5" fill="none" stroke="#cfcfcf" strokeWidth="2" />
                        <path d="M21 5 A11 11 0 0 1 5 21 Z" fill="#cfcfcf" />
                      </Ico>
                      <SmallCaret />
                    </IconRow>
                    <Ico w={28} h={24} style={{ marginLeft: 26 }}>
                      <path d="M0 1 H12 V3 H0Z M0 5 H28 V24 H0Z" fill="#d6d6d6" />
                    </Ico>
                    <Ico w={26} h={26} style={{ marginLeft: 36 }}>
                      <rect x="1.2" y="1.2" width="23.6" height="23.6" fill="none" stroke="#cfcfcf" strokeWidth="2.2" />
                      <path d="M13 7V19M7 13H19" stroke="#cfcfcf" strokeWidth="2.2" />
                    </Ico>
                    <Ico w={24} h={28} style={{ marginLeft: 37 }}>
                      <path d="M0 6H24M8 5V1.5H16V5" fill="none" stroke="#cfcfcf" strokeWidth="2.2" />
                      <path d="M3 6V27H21V6M8.5 10V23M12 10V23M15.5 10V23" fill="none" stroke="#cfcfcf" strokeWidth="2" />
                    </Ico>
                  </PanelFooter>
                </Panel>
              </Panels>
            </RightCols>
          </RightSide>
        </Workspace>
      </Window>

      <Dock>
        <DockSlot $open>
          <Ico w={78} h={74}>
            <defs><linearGradient id="finderL" x1="0" y1="0" x2="0" y2="1"><stop offset="0" stopColor="#2cd0fb" /><stop offset="1" stopColor="#1a74e6" /></linearGradient></defs>
            <rect width="78" height="74" rx="3" fill="#eef2f6" />
            <path d="M3 0 H46 C40 20 36 36 36 46 H46 C46 56 46 66 47 74 H3 C1 74 0 73 0 71 V3 C0 1 1 0 3 0 Z" fill="url(#finderL)" />
            <path d="M21 19 V32 M56 19 V32" stroke="#21345a" strokeWidth="3" />
            <path d="M14 48 C28 66 50 66 64 48" fill="none" stroke="#21345a" strokeWidth="2.6" />
          </Ico>
        </DockSlot>
        <DockSlot>
          <Ico w={84} h={84}>
            <defs><linearGradient id="launch" x1="0" y1="0" x2="0" y2="1"><stop offset="0" stopColor="#82898d" /><stop offset="1" stopColor="#b6bcbf" /></linearGradient></defs>
            <circle cx="42" cy="42" r="41" fill="#c8cccf" />
            <circle cx="42" cy="42" r="37" fill="url(#launch)" />
            <path d="M68 10 C52 14 40 26 34 40 L24 42 L14 54 L28 50 L38 58 L32 70 L46 62 L50 50 C62 42 70 26 68 10 Z" fill="#3f4346" />
            <circle cx="50" cy="30" r="5" fill="#a0a5a8" />
          </Ico>
        </DockSlot>
        <DockSlot>
          <Ico w={78} h={90}>
            <g transform="rotate(-5 39 45)">
              <rect x="8" y="3" width="62" height="84" fill="#f6f3e8" stroke="#a68524" strokeWidth="0.8" />
              <rect x="8" y="3" width="62" height="19" fill="#fbd33f" />
              <path d="M8 30H70M8 36H70M8 42H70M8 48H70M8 54H70M8 60H70M8 66H70M8 72H70M8 78H70" stroke="#c9c9c4" strokeWidth="1" />
            </g>
          </Ico>
        </DockSlot>
        <DockSlot>
          <Ico w={84} h={78}>
            <defs><linearGradient id="prefs" x1="0" y1="0" x2="0" y2="1"><stop offset="0" stopColor="#aebcc4" /><stop offset="1" stopColor="#6e7273" /></linearGradient></defs>
            <rect width="84" height="78" rx="4" fill="url(#prefs)" />
            <circle cx="42" cy="39" r="33" fill="#3b3d3f" />
            <circle cx="42" cy="39" r="27" fill="none" stroke="#9a9c9d" strokeWidth="8" strokeDasharray="5 4.2" />
            <circle cx="42" cy="39" r="22" fill="#4b4d4f" stroke="#a8aaab" strokeWidth="2" />
            <path d="M42 39 L42 18 M42 39 L24 50 M42 39 L60 50" stroke="#a8aaab" strokeWidth="6" />
            <circle cx="42" cy="39" r="5" fill="#a8aaab" />
          </Ico>
        </DockSlot>
        <DockSlot $open>
          <Ico w={84} h={84}>
            <defs><linearGradient id="subl" x1="0" y1="0" x2="0" y2="1"><stop offset="0" stopColor="#3c3c3c" /><stop offset="1" stopColor="#4d4d4d" /></linearGradient></defs>
            <rect width="84" height="84" rx="7" fill="url(#subl)" />
            <path d="M18 26 L66 11 V26 L38 34 L66 41 V56 L18 41 Z" fill="#f9971e" />
            <path d="M18 57 L40 50 L66 56 L18 73 Z" fill="#f9971e" />
            <path d="M40 50 L66 56 L52 61 L40 50 Z" fill="#d17c16" />
          </Ico>
        </DockSlot>
        <DockSlot $open>
          <Ico w={86} h={84}>
            <defs><linearGradient id="uDoc" x1="0" y1="0" x2="1" y2="1"><stop offset="0" stopColor="#fff" /><stop offset="1" stopColor="#e4e4e4" /></linearGradient></defs>
            <rect width="86" height="84" fill="url(#uDoc)" />
            <g transform="translate(15 15)"><UnityPaths color="#000" /></g>
          </Ico>
        </DockSlot>
        <DockSlot>
          <Ico w={94} h={90}>
            <defs><linearGradient id="xc" x1="0" y1="0" x2="0" y2="1"><stop offset="0" stopColor="#57b8f4" /><stop offset="1" stopColor="#1571d8" /></linearGradient></defs>
            <path d="M1 21 L74 11 L88 71 L11 85 Z" fill="url(#xc)" />
            <path d="M5 24 L71 15 L84 68 L14 81 Z" fill="none" stroke="#9fd4f8" strokeWidth="1" />
            <path d="M37 30 L23 72 L30 69 L41 33 Z M38 27 L72 71 M16 50 L72 40 M18 56 L73 46" fill="none" stroke="#c4e4fb" strokeWidth="1.2" />
            <path d="M70 36 L52 82" stroke="#1d1d1f" strokeWidth="9" strokeLinecap="round" />
            <path d="M72 11 L66 36 L72 37 L77 13 Z" fill="#b8bcc0" />
            <path d="M50 5 C58 0 72 -1 80 3 L92 8 L90 16 L76 11 C72 10 70 8 66 7 C60 5 54 5 50 5 Z" fill="#b8bcc0" />
          </Ico>
        </DockSlot>
        <DockSlot $open>
          <Ico w={84} h={84}>
            <path d="M8 20 A42 42 0 0 1 79 23 H42 L26 50 Z" fill="#db4c3f" />
            <path d="M8 20 L26 50 L56 54 L41 84 A42 42 0 0 1 8 20 Z" fill="#249e5a" />
            <path d="M79 23 A42 42 0 0 1 41 84 L56 54 L42 23 Z" fill="#fcc934" />
            <circle cx="42" cy="42" r="19" fill="#fff" />
            <circle cx="42" cy="42" r="15" fill="#4a88ee" />
          </Ico>
        </DockSlot>
        <DockSlot>
          <Ico w={82} h={94}>
            <defs><linearGradient id="andr" x1="0" y1="0" x2="0" y2="1"><stop offset="0" stopColor="#a4c639" /><stop offset="1" stopColor="#6f9a1f" /></linearGradient></defs>
            <rect x="60" y="0" width="14" height="34" fill="#a4c639" />
            <path d="M67 34 V44 H58" fill="none" stroke="#a4c639" strokeWidth="5" />
            <path d="M64 6h6M67 6v24" stroke="#e8f3c8" strokeWidth="1.6" />
            <path d="M19 25 C20 14 50 14 51 25 V37 H19 Z" fill="url(#andr)" />
            <path d="M16 18 L22 24 M54 18 L48 24" stroke="#a4c639" strokeWidth="1.6" />
            <circle cx="27" cy="27" r="1.8" fill="#fff" /><circle cx="43" cy="27" r="1.8" fill="#fff" />
            <rect x="19" y="40" width="32" height="33" rx="3" fill="url(#andr)" />
            <rect x="0" y="42" width="10" height="30" rx="5" fill="#88ad2b" />
            <rect x="54" y="40" width="10" height="12" rx="4" fill="#88ad2b" />
            <rect x="23" y="70" width="9" height="24" rx="4.5" fill="#7ca324" />
            <rect x="38" y="70" width="9" height="24" rx="4.5" fill="#7ca324" />
          </Ico>
        </DockSlot>
        <DockSlot>
          <Ico w={84} h={84}>
            <circle cx="42" cy="38" r="38" fill="#4fd68d" />
            <path d="M4 38 H80 A38 38 0 0 1 4 38 Z" fill="#5de79a" />
            <path d="M33 44 L17 78 L14 81 L14 84 L22 82 L40 48 Z M51 44 L44 48 L64 82 L71 84 L70 78 Z" fill="#d6ecf7" />
            <path d="M18 52 C28 70 58 72 68 42" fill="none" stroke="#d6ecf7" strokeWidth="6" />
            <path d="M38 14 H47 V21 H53 V41 L42 49 L31 41 V21 H38 Z" fill="#0f3d4c" />
            <circle cx="42" cy="31" r="4.5" fill="#4fd68d" />
          </Ico>
        </DockSlot>
        <DockSlot $open>
          <Ico w={84} h={90}>
            <defs><linearGradient id="vs" x1="0" y1="0" x2="1" y2="0"><stop offset="0" stopColor="#b084ec" /><stop offset="1" stopColor="#bf9cf0" /></linearGradient></defs>
            <path d="M55 2 L83 16 V71 L49 88 L2 67 V22 Z" fill="#fff" stroke="#8a5cc8" strokeWidth="3.5" strokeLinejoin="round" />
            <path d="M56 16 L72 22 V66 L56 74 Z" fill="url(#vs)" />
            <path d="M18 27 L56 58 V74 L12 33 Z" fill="#8f5fd8" />
            <path d="M56 16 V34 L18 63 L12 58 Z" fill="#7b46c4" />
            <path d="M12 33 L22 44 L12 56 Z" fill="#6a3bb0" />
          </Ico>
        </DockSlot>
        <DockSlot $open>
          <Ico w={84} h={74}>
            <rect x="1" y="1" width="82" height="72" rx="3" fill="#111" stroke="#b8b8b8" strokeWidth="1.6" />
            <rect x="6" y="6" width="72" height="62" fill="#232323" />
            <text x="10" y="24" fontSize="19" fontFamily="Liberation Mono, monospace" fontWeight="700" fill="#f4f4f4">&gt;_</text>
          </Ico>
        </DockSlot>
        <DockSlot>
          <Ico w={78} h={91}>
            <g fill="#1fbf3c">
              <path d="M45 45 L47 0 L59 3 Z" />
              <path d="M43 46 L22 27 L32 21 Z" />
              <path d="M48 48 L72 25 L78 34 Z" />
              <path d="M40 49 L25 42 L23 53 Z" />
              <path d="M50 52 L72 50 L72 61 Z" />
              <path d="M40 54 L1 73 L8 83 Z" />
              <path d="M44 56 L35 73 L45 76 Z" />
              <path d="M47 55 L65 91 L75 83 Z" />
            </g>
          </Ico>
        </DockSlot>
        <DockSlot $open>
          <Ico w={96} h={96}>
            <defs><linearGradient id="uBlack" x1="0" y1="0" x2="1" y2="1"><stop offset="0" stopColor="#333" /><stop offset="0.6" stopColor="#050505" /><stop offset="1" stopColor="#000" /></linearGradient></defs>
            <rect width="96" height="96" fill="url(#uBlack)" />
            <g transform="translate(19 21)"><UnityPaths /></g>
          </Ico>
        </DockSlot>
        <DockSlot $open>
          <Ico w={84} h={80}>
            <defs>
              <linearGradient id="msg" x1="0" y1="0" x2="0" y2="1"><stop offset="0" stopColor="#5cc4fb" /><stop offset="1" stopColor="#1b82f0" /></linearGradient>
              <linearGradient id="msg2" x1="0" y1="0" x2="0" y2="1"><stop offset="0" stopColor="#fff" /><stop offset="1" stopColor="#dbe9f6" /></linearGradient>
            </defs>
            <ellipse cx="42" cy="33" rx="42" ry="33" fill="url(#msg)" />
            <path d="M21 60 C20 67 18 71 14 74 C22 74 28 72 33 66 Z" fill="#1b82f0" />
            <ellipse cx="56" cy="54" rx="26" ry="21" fill="url(#msg2)" />
            <path d="M64 72 L73 78 L71 71 Z" fill="#dbe9f6" />
            <g fill="#2b63b8"><circle cx="44" cy="54" r="3.6" /><circle cx="57" cy="54" r="3.6" /><circle cx="70" cy="54" r="3.6" /></g>
          </Ico>
        </DockSlot>
        <DockSlot $open>
          <PsTile>Ps</PsTile>
        </DockSlot>
        <DockSep />
        <DockSlot>
          <Ico w={92} h={70}>
            <rect y="0" width="90" height="60" fill="#e6e6e6" />
            <rect x="14" y="3" width="76" height="57" fill="#262b22" />
            <path d="M20 14H50M24 20H66M24 26H50M20 32H42M28 38H62M28 44H52M20 50H46" stroke="#6d7844" strokeWidth="1.4" />
            <rect x="58" y="40" width="32" height="30" rx="3" fill="#4a4a4a" />
            <path d="M82 44 V52 L68 57 L82 60 V64 L64 67 V60 L76 55 L64 52 V49 Z" fill="#f9971e" />
          </Ico>
        </DockSlot>
        <DockSlot>
          <Ico w={92} h={78}>
            <rect y="0" width="90" height="66" fill="#1e1e1e" />
            <rect y="0" width="90" height="8" fill="#5a5a5a" />
            <path d="M8 14H30M12 20H44M12 26H34M8 32H28M16 38H46M12 44H32M8 52H40" stroke="#7a7a7a" strokeWidth="1.2" />
            <rect y="62" width="40" height="4" fill="#3d6ea8" />
            <path d="M76 48 L90 55 V72 L76 78 L62 72 V55 Z" fill="#fff" stroke="#8a5ac8" strokeWidth="2.5" />
            <path d="M67 58 L72 56 L80 63 V54 L86 58 V68 L80 72 L72 64 V68 L67 66 Z" fill="#8050c8" />
          </Ico>
        </DockSlot>
        <DockSlot>
          <Ico w={92} h={72}>
            <rect y="0" width="90" height="58" fill="#fff" />
            <rect y="0" width="90" height="7" fill="#333" />
            <rect y="7" width="90" height="10" fill="#3d9a3d" />
            <path d="M14 24H30M14 30H26M14 38H80M14 44H80M14 50H80" stroke="#ccc" strokeWidth="1.2" />
            <circle cx="72" cy="54" r="16" fill="#fcc934" />
            <path d="M72 38 A16 16 0 0 1 86 46 H72 L60 44 A16 16 0 0 1 72 38 Z" fill="#db4c3f" />
            <path d="M58 46 A16 16 0 0 0 70 70 L76 58 Z" fill="#249e5a" />
            <circle cx="72" cy="54" r="7" fill="#fff" /><circle cx="72" cy="54" r="5" fill="#4a88ee" />
          </Ico>
        </DockSlot>
        <DockSlot>
          <Ico w={70} h={90}>
            <defs><linearGradient id="trash" x1="0" y1="0" x2="1" y2="0"><stop offset="0" stopColor="#5e6163" /><stop offset="0.5" stopColor="#a0a4a6" /><stop offset="1" stopColor="#6c6f71" /></linearGradient></defs>
            <path d="M1 16 L12 84 C14 90 56 90 58 84 L69 16 Z" fill="url(#trash)" />
            <ellipse cx="35" cy="16" rx="34" ry="10" fill="#4a4c4e" />
            <path d="M10 16 L16 5 L24 14 L32 2 L40 14 L48 4 L60 16 L52 22 H18 Z" fill="#e6e8ea" />
            <path d="M24 14 L30 20 L34 10 Z" fill="#c25b4a" />
            <path d="M44 12 L50 20 L40 20 Z" fill="#4a6fc2" />
          </Ico>
        </DockSlot>
      </Dock>
    </Page>
  );
};

export default App;
